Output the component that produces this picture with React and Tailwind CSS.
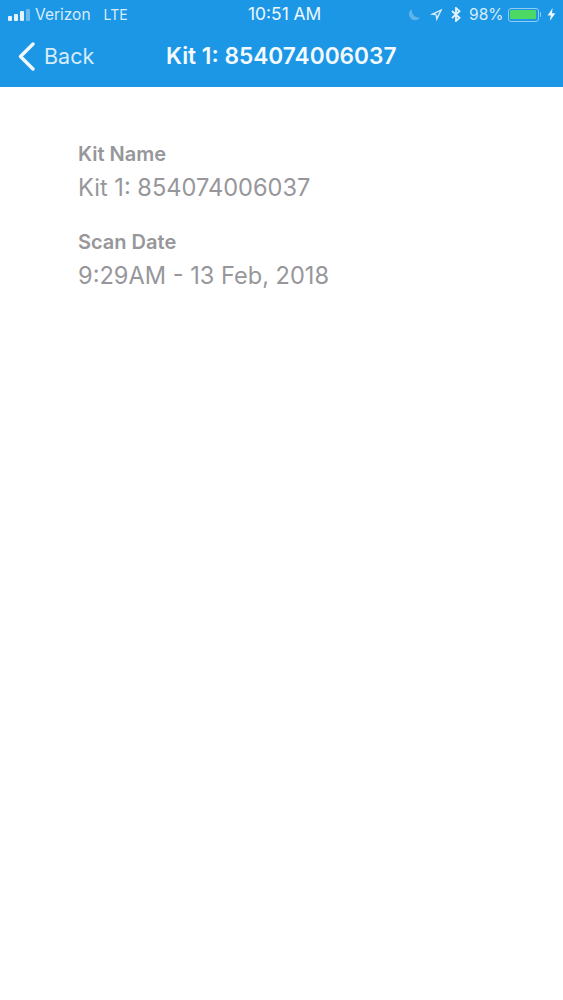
const font = "font-['Inter','Roboto',sans-serif]"

const SignalBars = () => (
  <div className="flex items-end gap-[2px] h-[12px]">
    <span className="w-[4px] h-[5px] rounded-[1px] bg-[#e6f3fc]" />
    <span className="w-[4px] h-[7px] rounded-[1px] bg-[#e6f3fc]" />
    <span className="w-[4px] h-[10px] rounded-[1px] bg-[#e6f3fc]" />
    <span className="w-[4px] h-[12px] rounded-[1px] bg-[#6cb9ec]" />
  </div>
)

const Moon = () => (
  <svg width="13" height="13" viewBox="0 0 13 13" className="text-[#62b3ea]">
    <path d="M4 1 A6 6 0 1 0 12 9.5 A7 7 0 0 1 4 1Z" fill="currentColor" />
  </svg>
)

const LocationArrow = () => (
  <svg width="14" height="14" viewBox="0 0 13 13" className="ml-[8px]">
    <path d="M12.5 .8 L.8 6 L6 6.8 L7 12.2Z M10 3 L5.4 5.6 L7 5.9 L7.4 8Z" fill="#d8ecfa" fillRule="evenodd" />
  </svg>
)

const Bluetooth = () => (
  <svg width="10" height="15" viewBox="0 0 10 15" fill="none" stroke="#e6f3fc" strokeWidth="1.8" className="ml-[8px]">
    <path d="M1 4 L8.5 10.8 L5 14 V1 L8.5 4.2 L1 11" />
  </svg>
)

const Battery = () => (
  <div className="flex items-center gap-[1px] ml-[4px]">
    <div className="w-[31px] h-[14px] rounded-[3px] border border-[#8fcbf2] p-[1.5px]">
      <div className="w-full h-full rounded-[1px] bg-[#4cd964]" />
    </div>
    <span className="w-[1.5px] h-[5px] rounded-r-[1px] bg-[#8fcbf2]" />
  </div>
)

const Bolt = () => (
  <svg width="9" height="13" viewBox="0 0 9 13" className="ml-[6px]">
    <path d="M5.6 0 L0.6 7.4 H3.8 L2.8 13 L8.4 5.2 H5 Z" fill="#eef7fd" />
  </svg>
)

const StatusBar = () => (
  <div className="relative flex items-center justify-between h-[29px] pl-[8px] pr-[7px] text-[15.5px] text-[#d8ecfa]">
    <div className="flex items-center">
      <SignalBars />
      <span className="ml-[5px]">Verizon</span>
      <span className="ml-[13px] text-[14px]">LTE</span>
    </div>
    <span className="absolute left-[248px] text-[17.4px] text-[#eef7fd]">10:51 AM</span>
    <div className="flex items-center">
      <Moon />
      <LocationArrow />
      <Bluetooth />
      <span className="ml-[8px]">98%</span>
      <Battery />
      <Bolt />
    </div>
  </div>
)

const NavBar = () => (
  <div className="relative flex items-center h-[58px] pb-[3px]">
    <div className="flex items-center gap-[9px] pl-[18px]">
      <svg width="17" height="29" viewBox="0 0 17 29" fill="none" stroke="#f0f8fe" strokeWidth="3.4" strokeLinecap="round" strokeLinejoin="round">
        <path d="M15 2 L2.5 14.5 L15 27" />
      </svg>
      <span className="text-[21.5px] text-[#d6ecfb]">Back</span>
    </div>
    <span className="absolute left-[166px] text-[22.7px] font-semibold text-[#f4fafe]">Kit 1: 854074006037</span>
  </div>
)

const Field = ({ label, value }) => (
  <div className="flex flex-col">
    <span className="text-[20px] leading-[26px] font-semibold text-[#97979b]">{label}</span>
    <span className="mt-[5px] text-[23.6px] leading-[32px] text-[#97979b]">{value}</span>
  </div>
)

export default function App() {
  return (
    <div className={`${font} w-[563px] h-[1000px] bg-white`}>
      <div className="bg-[#1c97e6]">
        <StatusBar />
        <NavBar />
      </div>
      <div className="flex flex-col gap-[25px] pl-[78px] pt-[54px]">
        <Field label="Kit Name" value="Kit 1: 854074006037" />
        <Field label="Scan Date" value="9:29AM - 13 Feb, 2018" />
      </div>
    </div>
  )
}
